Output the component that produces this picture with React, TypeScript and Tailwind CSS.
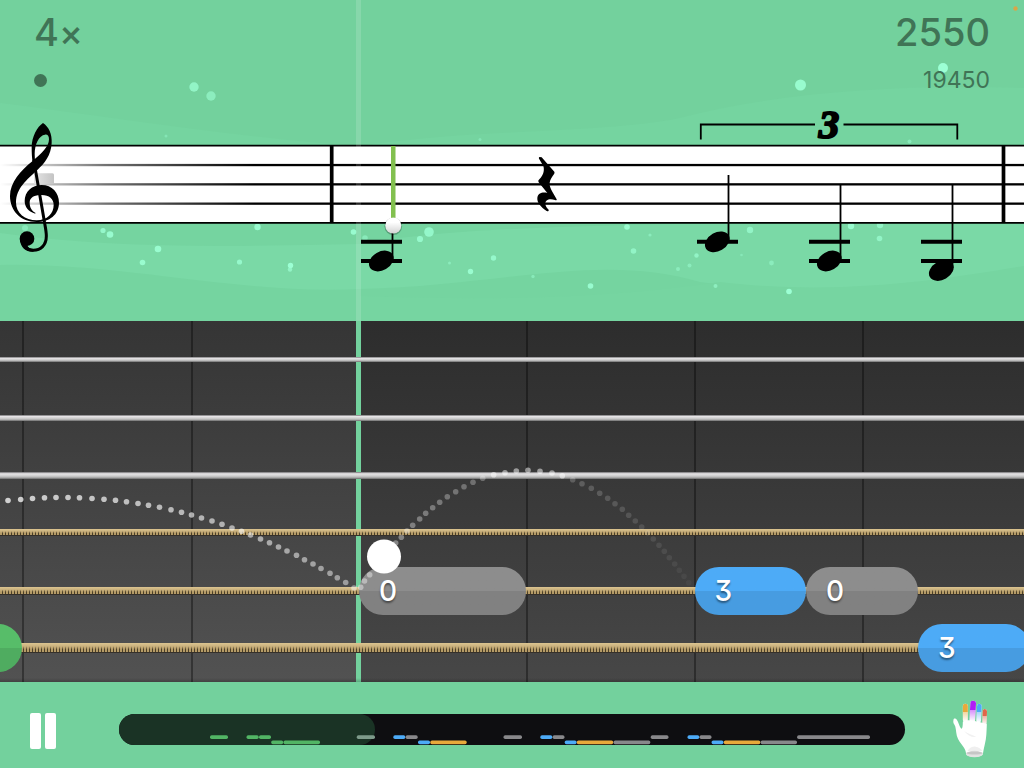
import React from "react";

const TOTAL_W = 1024;
const BOARD_H = 361;

const pct = (value: number, total: number) => `${(value / total) * 100}%`;

/* ---------- Score ---------- */

type Speck = [x: number, y: number, r: number, opacity: number];

const specks: Speck[] = [
  [194, 87, 4.7, 0.75], [211, 96, 4.7, 0.6], [166, 136, 1.5, 0.4], [943, 68, 5, 1], [800.5, 85, 5.5, 0.9],
  [25, 228, 3, 0.5], [103, 230.5, 2.6, 0.8], [110, 234.5, 3.3, 0.9], [158, 249, 3.3, 0.9], [142.5, 262.5, 2.8, 0.9],
  [257.5, 227, 3.2, 0.9], [239.5, 262, 2.6, 0.8], [290.5, 265.5, 2.7, 1], [290, 269.5, 2.2, 0.7], [353.5, 232, 2.8, 0.9],
  [365, 238, 2.8, 0.5], [420, 239, 3.1, 0.8], [429, 232, 4.8, 0.8], [470.5, 271.5, 2.7, 0.9], [493.5, 258, 2.7, 0.8],
  [449.5, 263, 1.5, 0.5], [533, 276.5, 1.7, 0.5], [590.5, 286, 2.8, 0.9], [480, 139.5, 1.5, 0.4], [627, 227, 2.8, 0.9],
  [633.5, 251, 2.8, 0.7], [650, 235, 1.6, 0.5], [678, 269, 2, 0.5], [689.5, 265.5, 2, 0.5], [696.5, 255.5, 2.2, 0.7],
  [715.5, 286, 2, 0.6], [741.5, 255, 1.3, 0.4], [750, 230, 3.2, 0.7], [771.5, 263, 2.4, 0.5], [789, 291.5, 2.8, 1],
  [851, 226, 3.2, 0.9], [880, 225, 3.2, 0.7], [879.5, 238.5, 2.8, 0.7], [909.5, 141.5, 2, 0.5], [801, 89, 1, 0.5],
];

function Backdrop() {
  return (
    <svg
      aria-hidden="true"
      viewBox="0 0 1024 321"
      preserveAspectRatio="xMidYMid slice"
      className="absolute inset-0 h-full w-full"
    >
      <rect width="1024" height="321" fill="#73d19d" />
      <path d="M0 103C120 118 240 138 360 146C480 128 600 134 680 118C780 92 900 84 1024 88V321H0Z" fill="#75d4a0" />
      <path d="M0 233C120 250 240 246 360 244C480 222 700 226 800 220C900 228 960 208 1024 206V272C900 290 800 296 700 282C600 252 500 286 360 289C240 295 120 262 0 265Z" fill="#7ad9a6" />
      <path d="M360 296C480 300 600 300 720 282C840 296 940 280 1024 266V321H360Z" fill="#76d5a1" />
      {specks.map(([x, y, r, opacity], i) => (
        <circle key={i} cx={x} cy={y} r={r} fill="#9cffd4" opacity={opacity} />
      ))}
      <circle cx="1015.500" cy="8.500" r="2.200" fill="#d9a648" />
    </svg>
  );
}

function NoteHead({ x, y }: { x: number; y: number }) {
  return <ellipse cx={x} cy={y} rx="13.2" ry="9.3" transform={`rotate(-30 ${x} ${y})`} />;
}

function TrebleClef() {
  return (
    <g transform="scale(0.33333)">
      <path d="M106 641C86 635 74 622 74 603C74 575 96 555 125 555C156 555 177 578 177 608C177 644 148 666 110 666C62 666 30 632 30 588C30 548 62 512 97 484C125 460 147 440 147 418C147 408 143 403 135 404C117 406 104 432 104 462L105 486L98 488C96 474 95 460 95 442C95 410 112 380 129 369C146 380 157 402 155 430C153 466 134 490 112 510C80 540 48 565 48 607C48 640 75 661 110 661C142 661 161 640 161 615C161 597 148 585 125 585C103 585 89 592 89 608C89 620 94 632 106 638Z" />
      <path d="M101 480L109 525L134 670C137 686 139 696 139 708C139 736 122 751 100 751C90 751 82 748 77 742" fill="none" stroke="#000" strokeWidth="9" />
      <circle cx="81" cy="716" r="22" />
      <path d="M60 720C62 744 78 756 100 755L102 748C90 748 84 744 82 736Z" />
    </g>
  );
}

function Score() {
  return (
    <svg role="img" aria-label="Score" viewBox="0 100 1024 221" className="relative block h-auto w-full">
      <defs>
        <linearGradient id="lineFade" gradientUnits="userSpaceOnUse" x1="0" y1="0" x2="300" y2="0">
          <stop offset="0" stopColor="#000" stopOpacity="0" />
          <stop offset="0.35" stopColor="#000" stopOpacity="0.55" />
          <stop offset="0.85" stopColor="#000" />
        </linearGradient>
        <linearGradient id="restFade" x1="0" y1="0" x2="1" y2="0">
          <stop offset="0" stopColor="#e4e4e4" />
          <stop offset="1" stopColor="#c4c4c4" />
        </linearGradient>
        <linearGradient id="knob" x1="0" y1="0" x2="0" y2="1">
          <stop offset="0.3" stopColor="#fff" />
          <stop offset="1" stopColor="#d2d2d2" />
        </linearGradient>
      </defs>
      <rect y="146" width="1024" height="77" fill="#fff" />
      <path d="M0 145.700H1024M0 222.900H1024" stroke="#000" strokeWidth="1.800" />
      {[165, 184.3, 203.6].map((y) => (
        <rect key={y} y={y - 1.1} width="1024" height="2.300" fill="url(#lineFade)" />
      ))}
      <rect x="34" y="173.300" width="20" height="11" rx="1.500" fill="url(#restFade)" />
      <TrebleClef />
      <path d="M331.700 146V222.500M1003.500 146V222.500" stroke="#000" strokeWidth="3.700" />

      <path
        d="M361 241.800H402M361 261H402M697 241.800H738M809 241.800H850M809 261H850M921 241.800H962M921 261H962"
        stroke="#000"
        strokeWidth="4"
      />
      <path d="M392.500 232V259M728.500 175V240M840.500 185V259M952.500 185V268" stroke="#000" strokeWidth="1.800" />
      <NoteHead x={381.3} y={261} />
      <NoteHead x={717.3} y={241.8} />
      <NoteHead x={829.3} y={261} />
      <NoteHead x={941.3} y={270.5} />
      <path
        transform="translate(300 120) scale(0.33333)"
        d="M719 111L725 112L763 155C765 159 762 162 758 168C745 187 747 197 757 215L770 238C771 241 768 242 765 240C748 234 735 240 736 252C737 260 741 265 746 269C747 273 743 275 740 273C722 261 711 248 712 234C713 220 728 215 742 219L716 187C714 183 715 181 718 178C733 163 733 147 730 138L718 118C716 114 716 112 719 111Z"
      />

      <rect x="391" y="146" width="4.500" height="75" fill="#82c04f" />
      <circle cx="393.300" cy="226.200" r="8.800" fill="#000" opacity="0.25" />
      <circle cx="393.300" cy="225.500" r="8" fill="url(#knob)" />

      <path d="M700.800 139.500V124.500H815M843.500 124.500H957.300V139.500" fill="none" stroke="#000" strokeWidth="1.800" />
      <text
        x="829"
        y="138"
        textAnchor="middle"
        stroke="#000"
        strokeWidth="2"
        strokeLinejoin="round"
        className="font-['Liberation_Serif',serif] text-[41px] font-bold italic"
      >
        3
      </text>
    </svg>
  );
}

/* ---------- Fretboard ---------- */

type Pill = { start: number; end: number; fret?: string; color: "gray" | "blue" | "green" };

const pillColors = {
  gray: "bg-linear-to-b from-[#8d8d8d] from-50% to-[#818181] to-50%",
  blue: "bg-linear-to-b from-[#4dabf7] from-50% to-[#479ce1] to-50%",
  green: "bg-linear-to-b from-[#57bd69] from-50% to-[#4fac60] to-50%",
};

const plain = "bg-[linear-gradient(#6e6e70_0%,#e6e4e6_25%,#cfcfcf_55%,#b4b4b4_75%,#6a6a6a_100%)]";
const wound =
  "border-b border-[#35302a] bg-[linear-gradient(#dcc591_0%,#cbb27e_35%,transparent_70%),repeating-linear-gradient(90deg,#b59b67_0px,#b59b67_2px,#4c4028_2px,#4c4028_3px)]";

const strings: { look: string; pills: Pill[] }[] = [
  { look: `h-[5px] ${plain}`, pills: [] },
  { look: `h-1.5 ${plain}`, pills: [] },
  { look: `h-[7px] ${plain}`, pills: [] },
  { look: `h-[7px] ${wound}`, pills: [] },
  {
    look: `h-2 ${wound}`,
    pills: [
      { start: 359, end: 526, fret: "0", color: "gray" },
      { start: 694.5, end: 806, fret: "3", color: "blue" },
      { start: 806, end: 918, fret: "0", color: "gray" },
    ],
  },
  {
    look: `h-2.5 ${wound}`,
    pills: [
      { start: -90, end: 22, color: "green" },
      { start: 918, end: 1030, fret: "3", color: "blue" },
    ],
  },
];

const frets = [23, 191.5, 527, 695, 863];

const arcBefore: [number, number][] = [
  [8, 500.5], [20.7, 499.5], [32.5, 498.5], [44.5, 497.8], [56, 497.5], [68, 497.5], [79.5, 497.8], [92, 498.5],
  [104, 499.3], [115.5, 500.3], [126.5, 501.7], [138, 503.5], [148.5, 505.3], [159.5, 507.3], [171, 509.8],
  [181.5, 512.3], [191.5, 515], [201.5, 518], [212, 521], [222, 524.3], [232, 528], [241.5, 531.3], [250.5, 535],
  [260.5, 539], [269.5, 542.7], [278.5, 547], [287, 551], [296.5, 555.3], [304.5, 559.7], [313, 564], [321, 568.5],
  [330, 573.3], [337.3, 577.7], [345.7, 582.5], [354, 588],
];

const arcAfter: [number, number][] = [
  [360.7, 587.3], [364.5, 581], [369.7, 574.7], [395.7, 543], [401.3, 537.3], [407, 531], [412.7, 525.3], [419.7, 519],
  [425.7, 513.3], [432.7, 507.7], [439.7, 502.3], [447.3, 496.7], [455.7, 491.7], [464, 486.7], [473, 482.3],
  [482.7, 478.3], [493.7, 474.7], [505, 472.7], [516.3, 471], [528, 470.3], [540, 471.3], [552, 473], [562.3, 475.7],
  [572.7, 479.7], [582, 483.7], [591.3, 488.3], [599.7, 493.3], [607.7, 498.3], [615, 503.7], [622.3, 509.3],
  [628.7, 515.3], [635.3, 521], [641.7, 527], [647.7, 533], [653.3, 539], [659, 545.3], [664.3, 551.3], [669.3, 557.7],
  [674.7, 564], [679.3, 570.3], [684, 576.3], [688.7, 582.7],
];

function Trail() {
  const y = (v: number) => pct(v - 321, BOARD_H);
  return (
    <svg aria-hidden="true" className="absolute inset-0 h-full w-full">
      {arcBefore.map(([cx, cy], i) => (
        <circle key={cx} cx={pct(cx, TOTAL_W)} cy={y(cy)} r="2.800" fill="#fff" opacity={0.75 - (i / 34) * 0.3} />
      ))}
      {arcAfter.map(([cx, cy], i) => (
        <circle
          key={cx}
          cx={pct(cx, TOTAL_W)}
          cy={y(cy)}
          r="2.800"
          fill="#fff"
          opacity={cy > 470 && cy < 478 ? 0.5 : 0.4 - (i / 42) * 0.37}
        />
      ))}
      <circle cx={pct(384, TOTAL_W)} cy={y(556.5)} r="17" fill="#fff" />
    </svg>
  );
}

function Fretboard() {
  return (
    <main className="relative flex flex-1 overflow-hidden bg-linear-to-b from-[#2d2d2d] to-[#474747]">
      <div className="absolute inset-y-0 left-0 w-[35%] bg-linear-to-b from-[#353535] to-[#525252]" />
      {frets.map((x) => (
        <div key={x} className="absolute inset-y-0 -ml-px w-0.5 bg-black/35" style={{ left: pct(x, TOTAL_W) }} />
      ))}
      <div className="absolute inset-y-0 left-[35%] -ml-0.5 w-[5px] bg-[#73d19d]" />
      <div className="relative flex flex-1 flex-col pt-2.5 pb-[5px]">
        {strings.map((s, i) => (
          <div key={i} className="relative flex min-h-12 flex-1 items-center">
            <div className={`w-full ${s.look}`} />
            {s.pills.map((p) => (
              <div
                key={p.start}
                className={`absolute flex h-12 items-center rounded-full pl-5 ${pillColors[p.color]}`}
                style={{ left: pct(p.start, TOTAL_W), width: pct(p.end - p.start, TOTAL_W) }}
              >
                {p.fret && (
                  <span className="font-['Inter',sans-serif] text-[28px] leading-none font-medium text-white [font-feature-settings:'cv09'] [text-shadow:0_2px_2px_rgb(0_0_0/0.45)]">
                    {p.fret}
                  </span>
                )}
              </div>
            ))}
          </div>
        ))}
      </div>
      <Trail />
      <div className="absolute inset-x-0 bottom-0 h-1 bg-linear-to-b from-transparent to-black/20" />
    </main>
  );
}

/* ---------- Transport ---------- */

type Segment = [start: number, end: number, row: 0 | 1, color: string];

const GREEN = "#52b565";
const GRAY = "#88888b";
const BLUE = "#4dabf7";
const ORANGE = "#e8a93b";

const segments: Segment[] = [
  [210, 228, 0, GREEN], [246.5, 258.7, 0, GREEN], [259, 271, 0, GREEN], [271.2, 283.2, 1, GREEN], [283.5, 320, 1, GREEN],
  [356.7, 375, 0, "#7d9a8a"], [393.3, 405.3, 0, BLUE], [405.6, 417.7, 0, GRAY], [418, 430, 1, BLUE], [430.3, 466.7, 1, ORANGE],
  [503.5, 522, 0, GRAY], [540.3, 552.3, 0, BLUE], [552.6, 564.5, 0, GRAY], [564.7, 576.6, 1, BLUE], [576.8, 613.2, 1, ORANGE],
  [613.5, 650.3, 1, GRAY], [650.7, 668.5, 0, GRAY], [687.5, 699.3, 0, BLUE], [699.5, 711.5, 0, GRAY], [711.6, 723.5, 1, BLUE],
  [723.8, 760.3, 1, ORANGE], [760.6, 797, 1, GRAY], [797.1, 870, 0, GRAY],
];

function Overview() {
  return (
    <div
      role="progressbar"
      aria-label="Song position"
      aria-valuenow={33}
      className="relative h-[31px] flex-1 overflow-hidden rounded-full bg-[#0e0e11]"
    >
      <div className="h-full w-[32.6%] rounded-r-full bg-[#1a3325]" />
      <svg aria-hidden="true" className="absolute inset-0 h-full w-full">
        {segments.map(([start, end, row, color]) => (
          <rect
            key={start}
            x={pct(start - 119, 786)}
            y={row === 0 ? 21.2 : 26.4}
            width={pct(end - start, 786)}
            height="3.800"
            rx="1.700"
            fill={color}
          />
        ))}
      </svg>
    </div>
  );
}

const fingers = [
  { id: "index", x: 105.5, top: 42, bottom: 98, color: "#e8a93b", w: 15, tilt: 0 },
  { id: "middle", x: 126, top: 33, bottom: 98, color: "#b01cf5", w: 17, tilt: 3 },
  { id: "ring", x: 145, top: 42, bottom: 100, color: "#4dabf7", w: 14, tilt: 3 },
  { id: "pinky", x: 162.5, top: 58, bottom: 108, color: "#e0654a", w: 13, tilt: 2 },
];

function Hand() {
  return (
    <svg aria-hidden="true" viewBox="66 28 110 180" className="h-[60px] w-[37px]">
      <defs>
        {fingers.map((f) => (
          <linearGradient key={f.id} id={f.id} x1="0" y1="0" x2="0" y2="1">
            <stop offset="0.42" stopColor={f.color} />
            <stop offset="0.43" stopColor={f.color} stopOpacity="0.5" />
            <stop offset="0.95" stopColor={f.color} stopOpacity="0" />
          </linearGradient>
        ))}
      </defs>
      {fingers.map((f) => (
        <g key={f.id} transform={`rotate(${f.tilt} ${f.x} ${f.bottom})`}>
          <rect x={f.x - f.w / 2} y={f.top} width={f.w} height={f.bottom - f.top} rx="7" fill="#fff" />
          <rect x={f.x - f.w / 2} y={f.top} width={f.w} height={f.bottom - f.top} rx="7" fill={`url(#${f.id})`} />
        </g>
      ))}
      <path
        fill="#fff"
        d="M70 90C70 86 77 85 80 90C85 98 87 108 92 116C96 120 98 112 98 96C105 91 118 91 128 93C140 94 154 98 170 104C169 126 169 146 164 164C161 174 160 184 158 194C150 205 116 205 108 194C107 186 106 180 100 172C92 160 84 152 80 138C77 126 78 112 72 104C69 99 69 95 70 90Z"
      />
      <path d="M102 124C112 136 124 144 138 142C128 136 112 132 102 124Z" fill="#f1f1f1" />
      <path d="M112 184C118 174 128 170 136 171C146 172 152 178 157 184Z" fill="#efefef" />
      <ellipse cx="133" cy="193" rx="25" ry="10" fill="#e2e2e2" />
      <path d="M108 191C112 184 154 184 158 191C152 196 114 196 108 191Z" fill="#c6c6c6" />
    </svg>
  );
}

export default function App() {
  return (
    <div className="flex min-h-screen flex-col bg-[#73d19d] font-['Inter',sans-serif]">
      <section className="relative">
        <Backdrop />
        <header className="relative flex h-[100px] items-start justify-between px-[34px] pt-3 text-[#407456]">
          <div className="flex flex-col gap-5">
            <span className="h-[42px] text-[38px] leading-10 font-medium">
              4<span className="text-4xl leading-10">×</span>
            </span>
            <span className="size-[13px] rounded-full bg-current" />
          </div>
          <div className="flex flex-col items-end gap-3">
            <span className="text-[38px] leading-10 font-medium">2550</span>
            <span className="text-[23px] leading-8">19450</span>
          </div>
        </header>
        <Score />
        <div className="absolute inset-y-0 left-[35%] -ml-0.5 w-[5px] bg-white/15" />
      </section>

      <Fretboard />

      <footer className="flex h-[86px] items-center pt-[11px]">
        <button type="button" aria-label="Pause" className="ml-[30px] flex h-9 w-[89px] gap-1">
          <span className="h-full w-[11px] rounded-xs bg-white" />
          <span className="h-full w-[11px] rounded-xs bg-white" />
        </button>
        <div className="flex flex-1 pb-[3px]">
          <Overview />
        </div>
        <button type="button" aria-label="Fingering" className="flex w-[119px] items-center pb-1 pl-[47px]">
          <Hand />
        </button>
      </footer>
    </div>
  );
}
